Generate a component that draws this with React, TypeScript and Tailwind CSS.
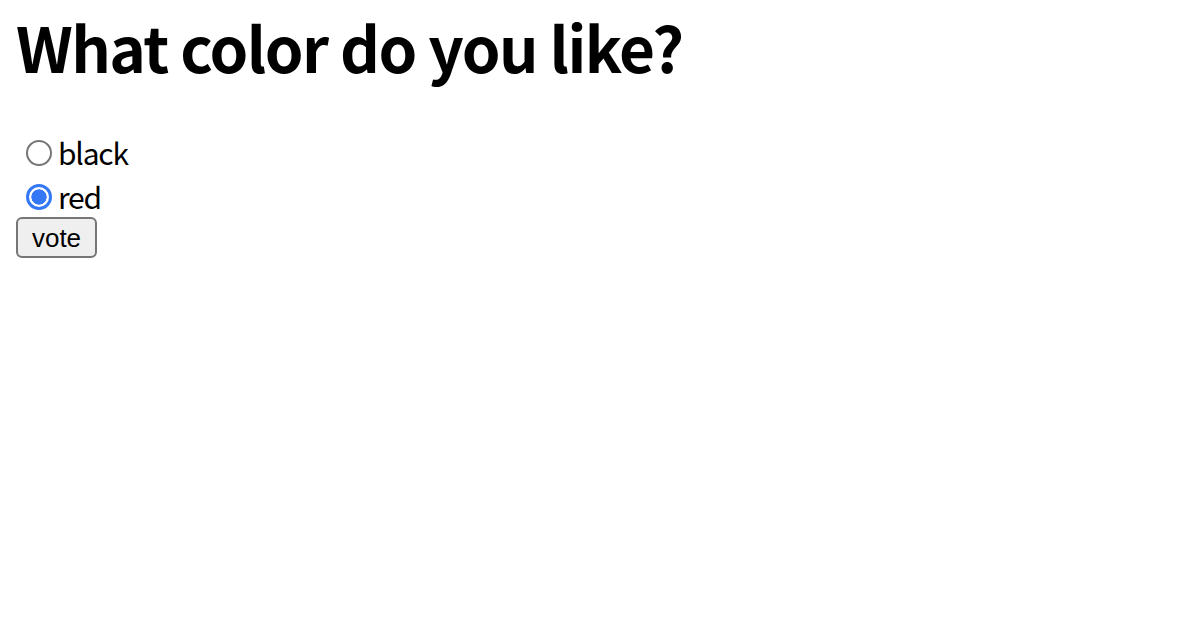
import { useState } from "react";

const COLORS = ["black", "red"] as const;

export default function App() {
  const [picked, setPicked] = useState<string>("red");

  return (
    <div className="min-h-[620px] bg-white px-4 pb-4 font-['Noto_Sans_CJK_KR','Noto_Sans',sans-serif] text-black">
      <h1 className="mb-[40px] text-[62px] font-bold leading-normal tracking-[-0.025em]">What color do you like?</h1>
      <form onSubmit={(e) => e.preventDefault()} className="flex flex-col items-start">
        <div className="flex flex-col gap-[4px]">
          {COLORS.map((c) => (
            <label key={c} className="flex h-[40px] items-center text-[30px] tracking-[-0.04em]">
              <input
                type="radio"
                name="color"
                value={c}
                checked={picked === c}
                onChange={() => setPicked(c)}
                className="ml-[10px] mr-[6px] size-[26px] shrink-0 appearance-none rounded-full border-2 border-[#767676] bg-white checked:border-[3px] checked:border-[#3478f6] checked:bg-[radial-gradient(circle,#3478f6_0,#3478f6_52%,white_56%)]"
              />
              <span className="leading-[1.45]">{c}</span>
            </label>
          ))}
        </div>
        <button
          type="submit"
          className="block h-[41px] w-[81px] rounded-[6px] border-2 border-[#767676] bg-[#efefef] font-['Liberation_Sans',Arial,sans-serif] text-[26px] leading-none"
        >
          vote
        </button>
      </form>
    </div>
  );
}
